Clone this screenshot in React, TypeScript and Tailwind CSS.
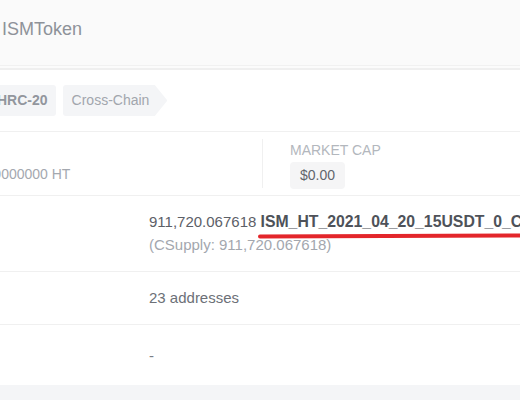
export default function App() {
  return (
    <div className="relative w-[520px] h-[400px] overflow-hidden bg-[#f4f5f7] font-['Liberation_Sans',Arial,sans-serif]">
      {/* header */}
      <div className="h-[65px] bg-[#fafafa] pl-[2px] pt-[17px] text-[18px] leading-[24px] text-[#8e9299]">
        ISMToken
      </div>
      <div className="h-[1px] bg-[#f1f1f1]" />
      <div className="h-[2px] bg-[#fbfbfb]" />
      <div className="h-[2px] bg-[#efefef]" />

      <div className="bg-white">
        {/* tags */}
        <div className="h-[62px] border-b border-[#f0f0f0] flex items-start pt-[15px] ml-[-11px] gap-[7px]">
          <div className="h-[31px] flex items-center px-[8px] rounded-[3px] bg-[#f4f5f7] text-[14px] font-bold text-[#92969d] whitespace-nowrap">
            HRC-20
          </div>
          <div className="h-[31px] flex items-center pl-[9px] pr-[18px] bg-[#f4f5f7] text-[14px] text-[#a2a6ad] whitespace-nowrap [clip-path:polygon(0_0,88%_0,100%_50%,88%_100%,0_100%)] rounded-l-[3px]">
            Cross-Chain
          </div>
        </div>

        {/* stats */}
        <div className="h-[64px] border-b border-[#f0f0f0] flex">
          <div className="w-[262px] pt-[33px]">
            <div className="ml-[-30px] whitespace-nowrap text-[14px] leading-[18px] text-[#a4a8af]">
              1000000000 HT
            </div>
          </div>
          <div className="w-px bg-[#f0f0f0] my-[7px]" />
          <div className="pl-[27px] pt-[9px]">
            <div className="text-[14px] leading-[18px] text-[#b3b7bd] uppercase">Market Cap</div>
            <div className="mt-[3px] h-[27px] inline-flex items-center px-[10px] rounded-[4px] bg-[#f5f5f6] text-[14px] text-[#62666d]">
              $0.00
            </div>
          </div>
        </div>

        {/* supply */}
        <div className="h-[76px] border-b border-[#f0f0f0] pl-[149px] pt-[14px] text-[15px] leading-[23px] whitespace-nowrap">
          <div className="text-[#5c6067]">
            911,720.067618{" "}
            <span className="font-bold text-[15.8px] text-[#4e5259]">ISM_HT_2021_04_20_15USDT_0_C</span>
          </div>
          <div className="text-[#a3a7ae]">(CSupply: 911,720.067618)</div>
        </div>

        {/* holders */}
        <div className="h-[53px] border-b border-[#f0f0f0] pl-[149px] flex items-center text-[15px] text-[#6c7077]">
          23 addresses
        </div>

        {/* transfers */}
        <div className="h-[60px] pl-[149px] pt-[2px] flex items-center text-[15px] text-[#7a7e85]">
          -
        </div>
      </div>

      {/* red annotation underline */}
      <div className="absolute left-[258px] top-[234px] w-[280px] h-[4px] rounded-full bg-[#e3262b] -rotate-[0.25deg]" />
    </div>
  );
}
